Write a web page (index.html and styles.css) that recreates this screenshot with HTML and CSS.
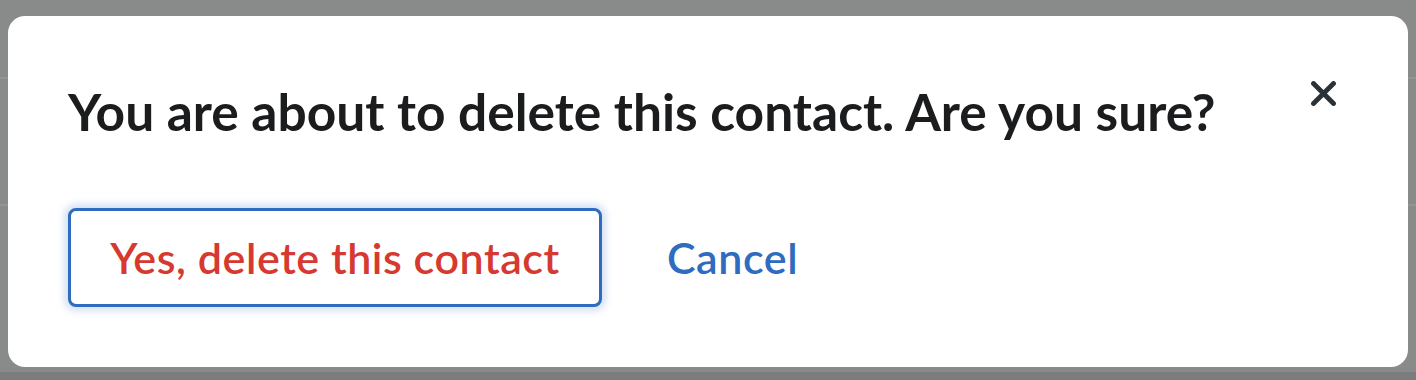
FILE: index.html
```html
<!DOCTYPE html>
<html lang="en">
<head>
<meta charset="utf-8">
<title>Delete contact</title>
<link rel="stylesheet" href="styles.css">
</head>
<body>
<div class="backdrop">
  <div class="bg-line bg-line-1"></div>
  <div class="bg-line bg-line-2"></div>
  <div class="dialog" role="dialog" aria-modal="true">
    <div class="dialog-head">
      <h2 class="dialog-title">You are about to delete this contact. Are you sure?</h2>
      <button class="close-btn" aria-label="Close">
        <svg width="25" height="25" viewBox="0 0 25 25"><path d="M2.5 2.5 L22.5 22.5 M22.5 2.5 L2.5 22.5" stroke="#2a3238" stroke-width="4.8" stroke-linecap="round" fill="none"/></svg>
      </button>
    </div>
    <div class="dialog-actions">
      <button class="btn-danger">Yes, delete this contact</button>
      <button class="btn-link">Cancel</button>
    </div>
  </div>
</div>
</body>
</html>
```
FILE: styles.css
```css
* { box-sizing: border-box; }
html, body { margin: 0; padding: 0; }
body {
  width: 1416px;
  height: 380px;
  background: #7b7c7e;
  font-family: "Lato", "Liberation Sans", sans-serif;
  overflow: hidden;
}
.backdrop {
  position: relative;
  height: 372px;
  background: #898a8a;
  padding: 16px 8px 5px 8px;
}
.bg-line {
  position: absolute;
  left: 0;
  right: 0;
  height: 2px;
  background: #939494;
}
.bg-line-1 { top: 77px; }
.bg-line-2 { top: 204px; }
.dialog {
  position: relative;
  background: #ffffff;
  border-radius: 17px;
  height: 351px;
  padding: 65px 60px 0 60px;
}
.dialog-head {
  display: flex;
  justify-content: space-between;
  align-items: flex-start;
}
.dialog-title {
  margin: 0;
  font-size: 51.5px;
  font-weight: 700;
  color: #1b1c1e;
  line-height: 1.2;
}
.close-btn {
  border: 0;
  background: none;
  padding: 0;
  width: 25px;
  height: 25px;
  margin-right: 12px;
  cursor: pointer;
}
.close-btn svg { display: block; }
.dialog-actions {
  display: flex;
  align-items: center;
  gap: 65px;
  margin-top: 65px;
}
.btn-danger {
  height: 99px;
  width: 534px;
  border: 3px solid #2f6bbf;
  border-radius: 8px;
  background: #fff;
  color: #d6392f;
  font-family: inherit;
  font-size: 43px;
  font-weight: 600;
  letter-spacing: 0.55px;
  line-height: 1.2;
  padding: 0;
  box-shadow: 0 0 7px 4px rgba(47, 107, 191, 0.2);
}
.btn-link {
  border: 0;
  background: none;
  padding: 0;
  color: #2f6bbf;
  font-family: inherit;
  font-size: 43px;
  font-weight: 600;
  letter-spacing: 0.55px;
  line-height: 1.2;
}
```
